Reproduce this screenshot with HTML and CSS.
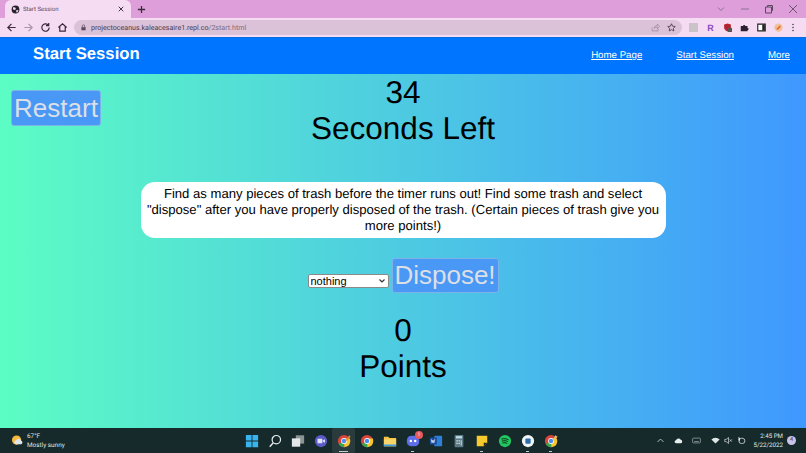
FILE: index.html
```html
<!DOCTYPE html>
<html lang="en">
<head>
  <meta charset="UTF-8">
  <title>Start Session</title>
  <link rel="stylesheet" href="styles.css">
</head>
<body>

<div class="tabstrip">
  <div class="tab">
    <svg class="favicon" viewBox="0 0 12 12"><circle cx="6" cy="6" r="5.2" fill="#2b2430"/><path d="M3 2.500l3 1 .5 2-2 1-2-1zM7 7l3-.5-1.500 3.500-1.500-.5z" fill="#f6dcf3"/></svg>
    <span class="tab-name">Start Session</span>
    <svg class="tab-close" viewBox="0 0 8 8"><path d="M1 1l6 6M7 1L1 7" stroke="#2b2430" stroke-width="1.200"/></svg>
  </div>
  <svg class="newtab" viewBox="0 0 10 10"><path d="M5 1v8M1 5h8" stroke="#3a2a3c" stroke-width="1.400"/></svg>
  <div class="win-btns">
    <svg viewBox="0 0 10 10"><path d="M2 3.500l3 3 3-3" fill="none" stroke="#8d7592"/></svg>
    <svg viewBox="0 0 10 10"><path d="M1 5h8" stroke="#8d7592"/></svg>
    <svg viewBox="0 0 10 10"><path d="M1.500 3h6v6h-6zM3.500 3V1.500h5v5H7.500" fill="none" stroke="#5a4a5e"/></svg>
    <svg viewBox="0 0 10 10"><path d="M1 1l8 8M9 1l-8 8" stroke="#6a5a6e"/></svg>
  </div>
</div>

<div class="toolbar">
  <svg class="nav" viewBox="0 0 12 12"><path d="M10.500 6H2M6 2L2 6l4 4" fill="none" stroke="#3a2a3c" stroke-width="1.300"/></svg>
  <svg class="nav" viewBox="0 0 12 12"><path d="M1.500 6H10M6 2l4 4-4 4" fill="none" stroke="#a995aa" stroke-width="1.300"/></svg>
  <svg class="nav" viewBox="0 0 12 12"><path d="M10 6a4 4 0 1 1-1.200-2.800M9.500 1v3h-3" fill="none" stroke="#3a2a3c" stroke-width="1.300"/></svg>
  <svg class="nav" viewBox="0 0 12 12"><path d="M1.500 6L6 2l4.500 4M3 5v5h6V5" fill="none" stroke="#3a2a3c" stroke-width="1.300"/></svg>
  <div class="omnibox">
    <svg class="lock" viewBox="0 0 10 10"><path d="M2 4.500h6V9H2z" fill="#5c4a60"/><path d="M3.300 4.500V3a1.700 1.700 0 0 1 3.400 0v1.500" fill="none" stroke="#5c4a60"/></svg>
    <span class="url">projectoceanus.kaleacesaire1.repl.co<span class="url-path">/2start.html</span></span>
    <svg class="omni-icon" viewBox="0 0 12 12"><path d="M1.500 6v4.500h8V8M4 7c.5-2.500 2.500-3.500 4.500-3.500V1.500l3 3-3 3V5.500C6.500 5.500 5 6 4 7z" fill="none" stroke="#8b7a8e" stroke-width=".8"/></svg>
    <svg class="omni-icon" viewBox="0 0 12 12"><path d="M6 1l1.500 3.300 3.500.4-2.600 2.400.7 3.500L6 8.900l-3.100 1.700.7-3.500L1 4.700l3.500-.4z" fill="none" stroke="#3a2a3c"/></svg>
  </div>
  <div class="ext-icons">
    <span class="ext-grey"></span>
    <span class="ext-r">R</span>
    <svg class="ext" viewBox="0 0 12 12"><path d="M1.500 2L6 .8 10.500 2v4c0 3-2.500 4.500-4.500 5.200C4 10.500 1.500 9 1.500 6z" fill="#b5242e"/><rect x="6.500" y="6.500" width="5.500" height="5.500" fill="#555"/></svg>
    <svg class="ext" viewBox="0 0 12 12"><path d="M1 4h3a1.500 1.500 0 0 1 3 0h3v2.500a1.500 1.500 0 0 1 0 3V11H1z" fill="#2a2030"/></svg>
    <svg class="ext" viewBox="0 0 12 12"><path d="M1 1.500h10v9H1z" fill="#fff" stroke="#222" stroke-width="1.500"/><path d="M7 2h3.500v8H7z" fill="#222"/></svg>
    <svg class="ext" viewBox="0 0 12 12"><circle cx="6" cy="6" r="5.500" fill="#f2bf9a"/><path d="M3 8l5-5 1 2-4 4z" fill="#e0681c"/></svg>
    <svg class="ext-menu" viewBox="0 0 4 12"><circle cx="2" cy="2" r="1" fill="#333"/><circle cx="2" cy="6" r="1" fill="#333"/><circle cx="2" cy="10" r="1" fill="#333"/></svg>
  </div>
</div>

<header class="site-header">
  <h1 class="site-title">Start Session</h1>
  <nav class="site-nav">
    <a href="#">Home Page</a>
    <a href="#">Start Session</a>
    <a href="#">More</a>
  </nav>
</header>

<main class="game">
  <button class="restart">Restart</button>
  <div class="timer">
    <div>34</div>
    <div>Seconds Left</div>
  </div>
  <p class="instructions">Find as many pieces of trash before the timer runs out! Find some trash and select "dispose" after you have properly disposed of the trash. (Certain pieces of trash give you more points!)</p>
  <div class="dispose-row">
    <select class="trash-select">
      <option>nothing</option>
    </select>
    <button class="dispose">Dispose!</button>
  </div>
  <div class="score">
    <div>0</div>
    <div>Points</div>
  </div>
</main>

<footer class="taskbar">
  <div class="weather">
    <svg class="weather-icon" viewBox="0 0 14 14"><circle cx="6" cy="6.500" r="5" fill="#f5b93e"/><path d="M5 11a2.300 2.300 0 0 1 .5-4.400 3 3 0 0 1 5.500.8 1.900 1.900 0 0 1 0 3.600z" fill="#dfe6ea"/></svg>
    <div>
      <div>67°F</div>
      <div>Mostly sunny</div>
    </div>
  </div>
  <div class="task-icons">
    <span class="task"><svg viewBox="0 0 16 16"><path d="M1 1h6.500v6.500H1zM8.500 1H15v6.500H8.500zM1 8.500h6.500V15H1zM8.500 8.500H15V15H8.500z" fill="#3ab4ee"/></svg></span>
    <span class="task"><svg viewBox="0 0 16 16"><circle cx="9.500" cy="6.500" r="4.800" fill="none" stroke="#e8eeee" stroke-width="1.400"/><path d="M6 10l-4 4.500" stroke="#e8eeee" stroke-width="1.600"/></svg></span>
    <span class="task"><svg viewBox="0 0 16 16"><rect x="5.500" y="1.500" width="9.500" height="9.500" fill="#8c9494"/><rect x="1" y="5" width="9.500" height="9.500" fill="#e4e8e8"/></svg></span>
    <span class="task"><svg viewBox="0 0 16 16"><circle cx="8" cy="8" r="7" fill="#5b5bc8"/><path d="M4 5.500h5.500v5H4zM10 7.500l2.500-1.500v4L10 8.500z" fill="#e3e3f6"/></svg></span>
    <span class="task task-active"><svg viewBox="0 0 16 16"><use href="#chrome"/><path d="M10 7l4-5.500 1.500 1.500L11 8z" fill="#e08a30"/></svg></span>
    <span class="task"><svg viewBox="0 0 16 16"><g id="chrome"><circle cx="8" cy="8" r="7" fill="#d9453a"/><path d="M8 8L2 11.500A7 7 0 0 0 8.500 15z" fill="#36a853"/><path d="M8 8l.5 7A7 7 0 0 0 14.500 5H8z" fill="#f7c52e"/><circle cx="8" cy="8" r="3.300" fill="#fff"/><circle cx="8" cy="8" r="2.500" fill="#4a8bf0"/></g></svg></span>
    <span class="task"><svg viewBox="0 0 16 16"><path d="M1 3h5l1.500 1.500H15V14H1z" fill="#f5c445"/><path d="M1 6h14v8H1z" fill="#f7d468"/><path d="M1 12h14v2H1z" fill="#3d9be0"/></svg></span>
    <span class="task task-open"><svg viewBox="0 0 16 16"><rect x="1" y="2" width="14" height="12" rx="5" fill="#5c6ee8"/><circle cx="5.500" cy="8" r="1.400" fill="#fff"/><circle cx="10.500" cy="8" r="1.400" fill="#fff"/></svg><span class="badge">1</span></span>
    <span class="task"><svg viewBox="0 0 16 16"><rect x="6" y="2" width="9" height="12" rx="1" fill="#2f7fd6"/><rect x="1" y="4" width="8" height="8" fill="#1d4f9e"/><path d="M2.500 6l1 4 1-3 1 3 1-4" fill="none" stroke="#fff" stroke-width=".8"/></svg></span>
    <span class="task"><svg viewBox="0 0 16 16"><rect x="3" y="1" width="10" height="14" rx="1" fill="#5d7a86"/><rect x="4.500" y="2.500" width="7" height="2.500" fill="#bfe0ea"/><path d="M5 7h1.500v1.500H5zM7.500 7H9v1.500H7.500zM10 7h1v6h-1zM5 10h1.500v1.500H5zM7.500 10H9v1.500H7.500z" fill="#dfe8ec"/></svg></span>
    <span class="task task-open"><svg viewBox="0 0 16 16"><path d="M2 2h12v8l-4 4H2z" fill="#f7ca2e"/><path d="M14 10h-4v4z" fill="#222"/></svg></span>
    <span class="task"><svg viewBox="0 0 16 16"><circle cx="8" cy="8" r="7" fill="#22c55e"/><path d="M4 5.800c3-.8 5.500-.5 8 .8M4.500 8c2.500-.6 4.500-.4 6.800.7M5 10.200c2-.4 4-.3 5.500.6" fill="none" stroke="#0d2a18" stroke-width="1.100"/></svg></span>
    <span class="task task-open"><svg viewBox="0 0 16 16"><circle cx="8" cy="8" r="7" fill="#f2f5f6"/><rect x="5" y="5" width="6" height="6" rx="1" fill="#2d6ea8"/></svg></span>
    <span class="task task-open"><svg viewBox="0 0 16 16"><use href="#chrome"/><path d="M10 7l3-5.500 2.500 1.500L11 8z" fill="#e8c75a"/></svg></span>
  </div>
  <div class="tray">
    <svg viewBox="0 0 12 12"><path d="M2 8l4-4 4 4" fill="none" stroke="#dfe6e6"/></svg>
    <svg class="tray-cloud" viewBox="0 0 12 12"><path d="M3 9.500a2 2 0 0 1-.3-4A3.500 3.500 0 0 1 9 5a2.300 2.300 0 0 1 .2 4.500z" fill="#e8eeee"/></svg>
    <svg class="tray-kbd" viewBox="0 0 12 12"><rect x=".8" y="2.800" width="10.400" height="6.400" rx="1" fill="none" stroke="#9aa5a5"/><path d="M3 7.300h6" stroke="#9aa5a5"/></svg>
    <svg class="tray-wifi" viewBox="0 0 12 12"><path d="M.5 4.500a8 8 0 0 1 11 0L6 10z" fill="#dfe6e6"/></svg>
    <svg viewBox="0 0 12 12"><path d="M1 4.500h2L6 2v8L3 7.500H1zM7.500 4.500l3 3M10.500 4.500l-3 3" fill="none" stroke="#dfe6e6" stroke-width=".9"/></svg>
    <svg viewBox="0 0 12 12"><rect x="2.500" y="3" width="8" height="7" rx="3.500" fill="none" stroke="#e8eeee"/><path d="M2 1l2 2v4L2 5z" fill="#e8eeee"/></svg>
    <div class="clock">
      <div>2:45 PM</div>
      <div>5/22/2022</div>
    </div>
    <span class="notify">4</span>
  </div>
</footer>

</body>
</html>
```

FILE: styles.css
```css
* {
  box-sizing: border-box;
}

body {
  margin: 0;
  width: 806px;
  height: 453px;
  overflow: hidden;
  display: flex;
  flex-direction: column;
  font-family: "Liberation Sans", Arial, sans-serif;
  text-rendering: geometricPrecision;
  background: #162a2c;
}

/* browser chrome */

.tabstrip {
  height: 18px;
  flex: none;
  display: flex;
  align-items: flex-end;
  background: #dd9ed9;
  padding-left: 5px;
}

.tab {
  width: 126px;
  height: 18px;
  background: #f6dcf3;
  border-radius: 6px 6px 0 0;
  display: flex;
  align-items: center;
  padding: 0 6px;
  color: #5a4a5e;
  font-family: Roboto, sans-serif;
  font-size: 6px;
}

.favicon {
  width: 9px;
  height: 9px;
  margin-right: 3px;
}

.tab-name {
  flex: 1;
}

.tab-close {
  width: 6px;
  height: 6px;
  margin-right: 1px;
}

.newtab {
  width: 9px;
  height: 9px;
  margin: 0 0 4px 6px;
}

.win-btns {
  margin-left: auto;
  display: flex;
  gap: 14px;
  padding: 0 8px 4px 0;
}

.win-btns svg {
  width: 10px;
  height: 10px;
}

.toolbar {
  height: 19px;
  flex: none;
  display: flex;
  align-items: center;
  background: #f6dcf3;
  padding-left: 6px;
}

.nav {
  width: 11px;
  height: 11px;
  margin-right: 6px;
}

.omnibox {
  width: 608px;
  height: 15px;
  border-radius: 8px;
  background: #dcc2d8;
  display: flex;
  align-items: center;
  padding: 0 6px 0 5px;
  font-family: Roboto, sans-serif;
  font-size: 7.100px;
  color: #4a3a4e;
}

.lock {
  width: 7px;
  height: 7px;
  margin: 0 4px 0 1px;
}

.url {
  flex: 1;
}

.url-path {
  color: #7d6b80;
}

.omni-icon {
  width: 9px;
  height: 9px;
  margin-left: 7px;
}

.ext-icons {
  display: flex;
  align-items: center;
  gap: 8px;
  margin-left: 7px;
}

.ext-grey {
  width: 9px;
  height: 9px;
  background: #cbc3c9;
}

.ext-r {
  width: 9px;
  font-size: 9px;
  font-weight: bold;
  color: #8a4ac0;
  text-align: center;
}

.ext {
  width: 9px;
  height: 9px;
}

.ext-menu {
  width: 4px;
  height: 9px;
}

/* site */

.site-header {
  height: 37px;
  flex: none;
  display: flex;
  justify-content: space-between;
  align-items: center;
  background: #0075ff;
  border-top: 1px solid #0a6ce0;
  padding: 0 16px 0 33px;
}

.site-title {
  margin: 0 0 4px;
  color: #fff;
  font-size: 16.700px;
  font-weight: bold;
}

.site-nav {
  display: flex;
  gap: 34px;
  padding-bottom: 1px;
}

.site-nav a {
  color: #fff;
  font-size: 9.700px;
}

.game {
  flex: 1;
  min-height: 0;
  background: linear-gradient(to right, #5cfdc4, #3f98ff);
  text-align: center;
  color: #000;
}

.restart {
  float: left;
  width: 90px;
  height: 36px;
  margin: 16px -101px 0 11px;
  padding: 0;
  background: #4a98f5;
  border: 1px solid #7cb3e8;
  border-radius: 3px;
  color: #dcdfe6;
  font-family: inherit;
  font-size: 26px;
}

.timer,
.score {
  font-size: 31.500px;
  line-height: 36px;
}

.instructions {
  width: 525px;
  height: 56px;
  margin: 36px auto 20px;
  padding: 4px 5px;
  background: #fff;
  border-radius: 14px;
  font-size: 13.100px;
  line-height: 16px;
}

.dispose-row {
  display: flex;
  justify-content: center;
  align-items: flex-end;
  gap: 3px;
  height: 35px;
}

.trash-select {
  appearance: none;
  width: 81px;
  height: 14px;
  margin-bottom: 5px;
  padding: 0 0 0 2px;
  font-family: inherit;
  font-size: 11px;
  border: 1px solid #8a8a8a;
  border-radius: 2px;
  background: #fff url("data:image/svg+xml,%3Csvg xmlns='http://www.w3.org/2000/svg' width='6' height='4'%3E%3Cpath d='M.5.5l2.500 2.500 2.500-2.500' fill='none' stroke='%23333' stroke-width='1.200'/%3E%3C/svg%3E") no-repeat right 3px center;
}

.dispose {
  width: 107px;
  height: 35px;
  padding: 0;
  background: #4a98f5;
  border: 1px solid #7cb3e8;
  border-radius: 3px;
  color: #dcdfe6;
  font-family: inherit;
  font-size: 26px;
}

.score {
  margin-top: 19px;
}

/* windows taskbar */

.taskbar {
  height: 25px;
  flex: none;
  display: flex;
  align-items: center;
  background: #162a2c;
  color: #dfe6e6;
  font-family: Roboto, sans-serif;
  font-size: 6.400px;
  line-height: 9px;
}

.weather {
  display: flex;
  align-items: center;
  gap: 3px;
  padding-left: 11px;
  width: 240px;
}

.weather-icon {
  width: 13px;
  height: 13px;
}

.task-icons {
  display: flex;
  align-items: center;
  width: 416px;
}

.task {
  position: relative;
  display: flex;
  width: 23px;
  height: 25px;
  align-items: center;
  justify-content: center;
  flex: none;
}

.task svg {
  width: 14px;
  height: 14px;
  display: block;
}

.task-active {
  background: #2a3b3d;
  border-radius: 2px;
}

.task-active::after,
.task-open::after {
  content: "";
  position: absolute;
  bottom: 1px;
  left: 10px;
  width: 3px;
  height: 1px;
  background: #c5cdcd;
}

.task-active::after {
  left: 7px;
  width: 9px;
}

.badge {
  position: absolute;
  top: 3px;
  right: 1px;
  width: 8px;
  height: 8px;
  border-radius: 50%;
  background: #e65a5a;
  color: #fff;
  font-size: 5px;
  line-height: 8px;
  text-align: center;
}

.tray {
  display: flex;
  align-items: center;
  gap: 4px;
  color: #dfe6e6;
}

.tray svg {
  width: 9px;
  height: 9px;
}

.tray-cloud,
.tray-kbd {
  margin-left: 5px;
}

.tray-wifi {
  margin-left: 6px;
}

.clock {
  width: 30px;
  font-size: 6.200px;
  text-align: right;
  margin-left: 3px;
}

.notify {
  width: 9px;
  height: 9px;
  border-radius: 50%;
  background: #c9c3ea;
  color: #333;
  font-size: 5.500px;
  line-height: 9px;
  text-align: center;
}
```
